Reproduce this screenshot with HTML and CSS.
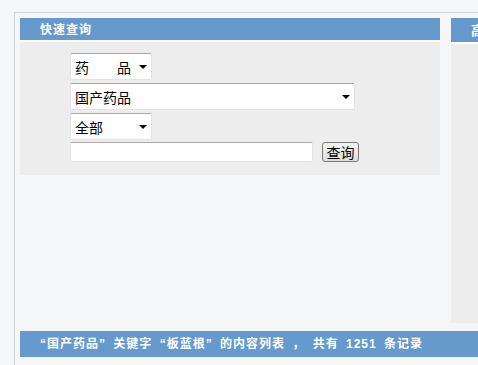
FILE: index.html
```html
<!DOCTYPE html>
<html lang="zh-CN">
  <head>
    <meta charset="UTF-8" />
    <title>快速查询</title>
    <link rel="stylesheet" href="styles.css">
  </head>
  <body>
    <div class="frame">
      <div class="top-row">
        <div class="panel quick">
          <div class="panel-title">快速查询</div>
          <form class="panel-body">
            <label class="select-box short">
              <select>
                <option>药　　品</option>
              </select>
              <span class="arrow"></span>
            </label>
            <label class="select-box long">
              <select>
                <option>国产药品</option>
              </select>
              <span class="arrow"></span>
            </label>
            <label class="select-box short">
              <select>
                <option>全部</option>
              </select>
              <span class="arrow"></span>
            </label>
            <div class="search-row">
              <input type="text" class="keyword" />
              <button type="button" class="search-btn">查询</button>
            </div>
          </form>
        </div>

        <div class="panel advanced">
          <div class="panel-title tall">高级查询</div>
          <div class="panel-body tall-body"></div>
        </div>
      </div>

      <div class="result-bar">“国产药品” 关键字 “板蓝根” 的内容列表 ， 共有 1251 条记录</div>
    </div>
  </body>
</html>
```

FILE: styles.css
```css
:root {
  --page-bg: #f5f6f8;
  --blue: #6699cc;
  --panel-bg: #ededed;
  --frame-line: #d2d3d5;
  --cjk: "Noto Sans CJK SC", "DejaVu Sans", sans-serif;
  --mixed: "Liberation Sans", "Noto Sans CJK SC", sans-serif;
}

* {
  margin: 0;
  padding: 0;
  box-sizing: border-box;
}

body {
  background-color: var(--page-bg);
  font-family: var(--cjk);
  overflow: hidden;
  height: 365px;
}

.frame {
  margin: 12px 0 0 14px;
  height: 353px;
  overflow: hidden;
  border-top: 1px solid var(--frame-line);
  border-left: 1px solid var(--frame-line);
  padding: 5px 0 0 5px;
}

.top-row {
  display: flex;
  align-items: flex-start;
  gap: 11px;
}

.panel {
  flex-shrink: 0;
}

.panel-title {
  height: 22px;
  background-color: var(--blue);
  color: white;
  font-size: 12px;
  font-weight: bold;
  line-height: 22px;
  letter-spacing: 1px;
  padding-left: 20px;
  border-bottom: 2px solid white;
  box-sizing: content-box;
  white-space: nowrap;
}

.panel-title.tall {
  height: 24px;
  line-height: 24px;
  font-size: 13px;
}

.quick {
  width: 420px;
}

.advanced {
  width: 260px;
}

.panel-body {
  background-color: var(--panel-bg);
}

.quick .panel-body {
  height: 133px;
  padding: 11px 0 0 50px;
  display: flex;
  flex-direction: column;
  align-items: flex-start;
  gap: 3px;
}

.tall-body {
  height: 279px;
}

.select-box {
  position: relative;
  display: block;
  height: 27px;
}

.select-box.short {
  width: 82px;
}

.select-box.long {
  width: 285px;
}

.select-box select {
  appearance: none;
  -webkit-appearance: none;
  width: 100%;
  height: 100%;
  background-color: white;
  border: 1px solid #e2e3e6;
  border-top-color: #a9a9a9;
  border-radius: 2px;
  padding-left: 4px;
  font-family: var(--cjk);
  font-size: 14px;
  color: black;
  outline: none;
}

.select-box .arrow {
  position: absolute;
  right: 5px;
  top: 12px;
  width: 0;
  height: 0;
  border-left: 4px solid transparent;
  border-right: 4px solid transparent;
  border-top: 4px solid black;
  pointer-events: none;
}

.search-row {
  display: flex;
  align-items: flex-start;
  gap: 9px;
  margin-top: -1px;
}

.keyword {
  width: 243px;
  height: 20px;
  background-color: white;
  border: 1px solid #e2e3e6;
  border-top-color: #a9a9a9;
  border-radius: 2px;
  outline: none;
}

.search-btn {
  width: 37px;
  height: 20px;
  font-family: var(--cjk);
  font-size: 14px;
  line-height: 16px;
  color: black;
  border: 1px solid #7a7a7a;
  border-radius: 3px;
  background: linear-gradient(#f4f4f4, #dcdcdc);
  cursor: pointer;
}

.result-bar {
  margin-top: 8px;
  height: 26px;
  background-color: var(--blue);
  color: white;
  font-family: var(--mixed);
  font-size: 12px;
  font-weight: bold;
  line-height: 26px;
  letter-spacing: 1px;
  word-spacing: 3px;
  padding-left: 20px;
  white-space: nowrap;
}
```
